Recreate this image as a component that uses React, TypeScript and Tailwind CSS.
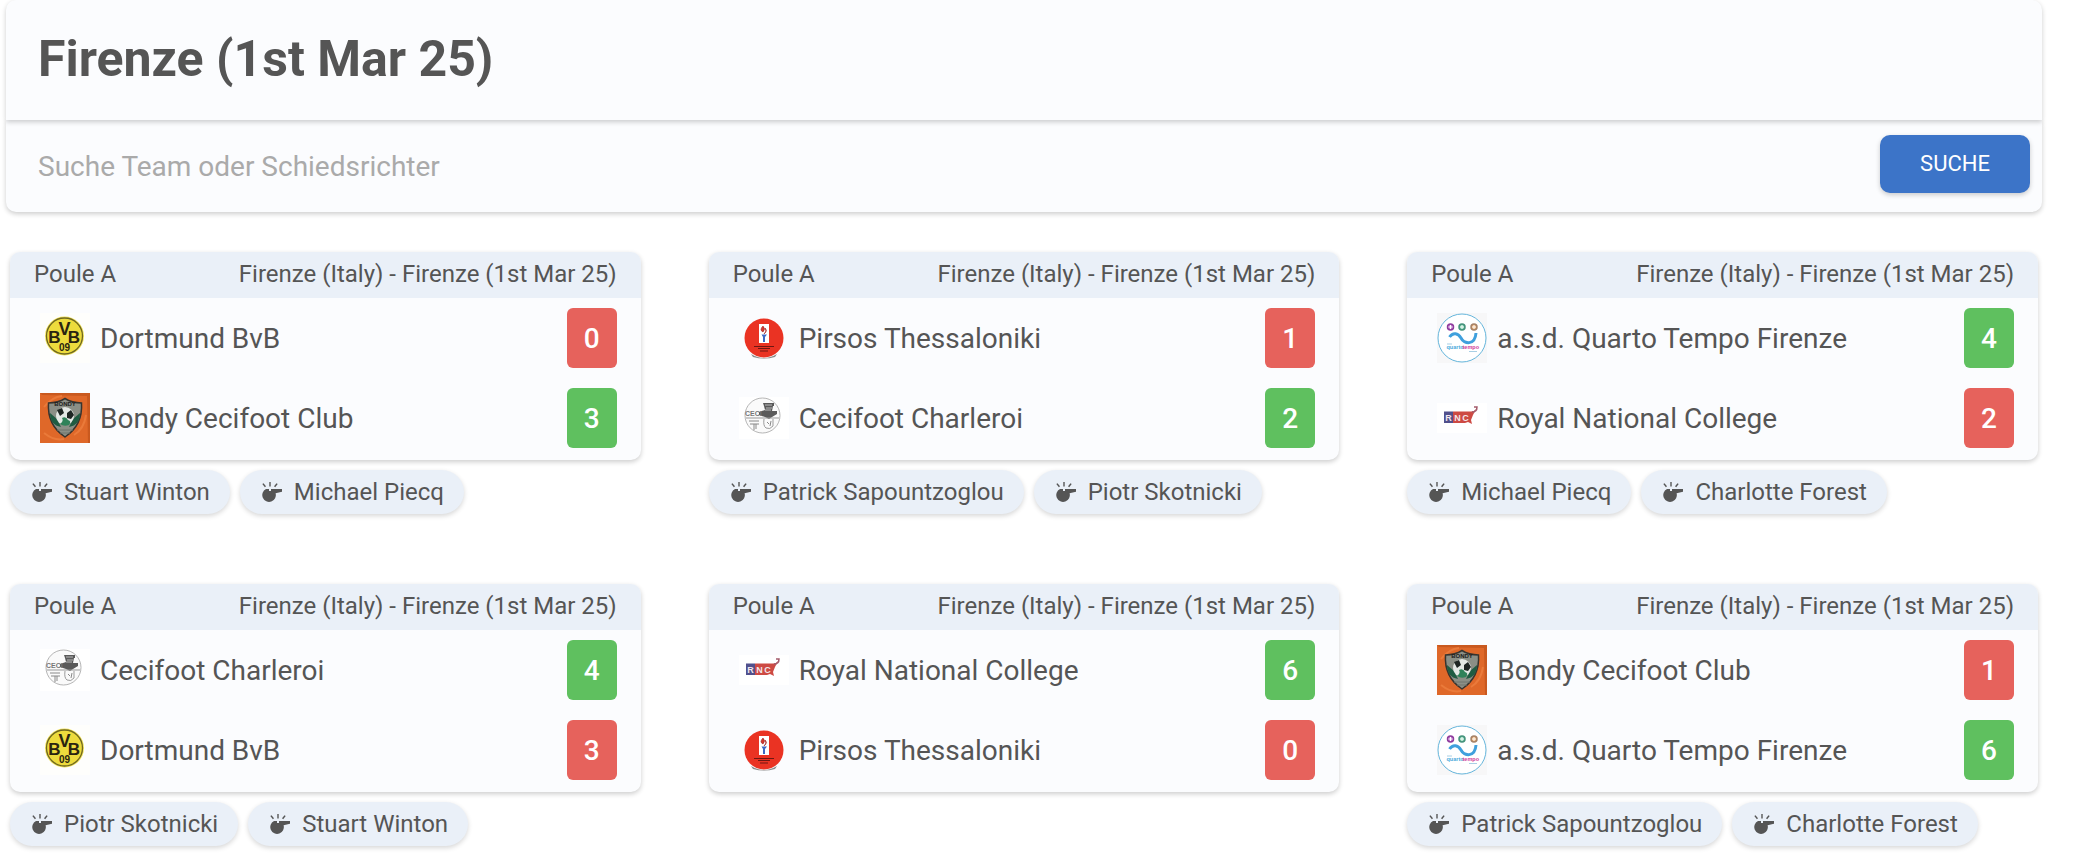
import type { ReactNode } from "react";

type Team = {
  name: string;
  logo: ReactNode;
};

const teams: Record<string, Team> = {
  bvb: { name: "Dortmund BvB", logo: <DortmundLogo /> },
  bondy: { name: "Bondy Cecifoot Club", logo: <BondyLogo /> },
  pirsos: { name: "Pirsos Thessaloniki", logo: <PirsosLogo /> },
  charleroi: { name: "Cecifoot Charleroi", logo: <CharleroiLogo /> },
  quarto: { name: "a.s.d. Quarto Tempo Firenze", logo: <QuartoLogo /> },
  rnc: { name: "Royal National College", logo: <RncLogo /> },
};

const tournament = "Firenze (1st Mar 25)";

const matches = [
  { id: 1, home: "bvb", away: "bondy", score: [0, 3], referees: ["Stuart Winton", "Michael Piecq"] },
  { id: 2, home: "pirsos", away: "charleroi", score: [1, 2], referees: ["Patrick Sapountzoglou", "Piotr Skotnicki"] },
  { id: 3, home: "quarto", away: "rnc", score: [4, 2], referees: ["Michael Piecq", "Charlotte Forest"] },
  { id: 4, home: "charleroi", away: "bvb", score: [4, 3], referees: ["Piotr Skotnicki", "Stuart Winton"] },
  { id: 5, home: "rnc", away: "pirsos", score: [6, 0], referees: [] },
  { id: 6, home: "bondy", away: "quarto", score: [1, 6], referees: ["Patrick Sapountzoglou", "Charlotte Forest"] },
];

function DortmundLogo() {
  return (
    <svg viewBox="0 0 50 50" className="size-[50px] shrink-0" aria-hidden="true">
      <rect width="50" height="50" fill="#fefefc" />
      <circle cx="24.5" cy="23" r="19.5" fill="#f1e25a" />
      <circle cx="24.5" cy="23" r="18" fill="#eddb3d" stroke="#6f6820" strokeWidth="1.3" />
      <g fill="#2a2410" fontFamily="'Liberation Sans Narrow', 'Liberation Sans', sans-serif" fontWeight="700" textAnchor="middle">
        <text x="14.5" y="29.5" fontSize="17">B</text>
        <text x="24.5" y="22" fontSize="18">V</text>
        <text x="34" y="29.5" fontSize="17">B</text>
        <text x="24.5" y="38" fontSize="10">09</text>
      </g>
    </svg>
  );
}

function BondyLogo() {
  return (
    <svg viewBox="0 0 50 50" className="size-[50px] shrink-0" aria-hidden="true">
      <rect width="50" height="50" fill="#df6829" />
      <path d="M0 0H50V50H48L47 3L2 2Z" fill="#c9591f" />
      <path d="M4 40Q14 48 24 46M34 42Q44 36 46 22M4 14Q12 4 22 3" fill="none" stroke="#ea7a3a" strokeWidth="2" />
      <path d="M8.5 10Q18 10 25 5.5Q32 10 41.5 10Q43 32 25 44Q7 32 8.5 10Z" fill="#8b8f86" stroke="#38342e" strokeWidth="1.5" />
      <path d="M10 20Q10 32 21 34L17 26Z" fill="#1f5c42" />
      <path d="M40 20Q40 32 29 34L33 26Z" fill="#1f5c42" />
      <circle cx="25" cy="23" r="9" fill="#e3e8e4" />
      <path d="M17 17L22 15L24 20L20 23ZM27 20L31 17L34 22L31 26L27 25Z" fill="#1e2623" />
      <path d="M20 31Q24 28 22 25Q26 23 28 27Q32 28 29 32Q24 34 20 31Z" fill="#2f8259" />
      <path d="M17 37H33M20 40H30" stroke="#6f746d" />
      <text x="25" y="13" fontSize="6" fontWeight="700" textAnchor="middle" fill="#1d1d1b" fontFamily="'Liberation Sans', sans-serif">
        BONDY
      </text>
    </svg>
  );
}

function PirsosLogo() {
  return (
    <svg viewBox="0 0 50 50" className="size-[50px] shrink-0" aria-hidden="true">
      <path d="M12 41Q25 49 38 41L36 44Q25 47 14 44Z" fill="#8a8a8a" />
      <circle cx="25" cy="25" r="19.5" fill="#ea3323" />
      <rect x="20" y="11" width="10" height="19" fill="#fff" />
      <path d="M24 13Q20 17 24 19Q27 16 24 13ZM26 15Q29 18 25 21L27 18Z" fill="#d5382e" stroke="#9c2222" strokeWidth="0.6" />
      <path d="M22.5 21.5H28L26 24V29H24V24Z" fill="#3f69c4" />
      <path d="M15 33.5H35M19 35.5H31M21 38H29" stroke="#6e1712" />
    </svg>
  );
}

function CharleroiLogo() {
  return (
    <svg viewBox="0 0 50 50" className="size-[50px] shrink-0" aria-hidden="true">
      <rect y="4" width="50" height="42" fill="#fff" />
      <circle cx="23.5" cy="22.5" r="17.5" fill="#fafafa" stroke="#b5b5b5" />
      <path d="M24 10H35V13H34L33 18H38V21L33 24L30 26L26 24L20 22V19L26 17L25 13Z" fill="#5a5a5a" />
      <path d="M26 12H33M27 15H33M26 17H32" stroke="#bbb" />
      <path d="M25 26Q24 33 27 35Q31 37 34 33L34 26" fill="none" stroke="#9b9b9b" />
      <path d="M28 29L30 31M32 28L31 33M10 28H20M11 31H20M15 31V37M17 31V36" stroke="#888" />
      <text x="6" y="23" fontSize="7" fontWeight="700" fill="#777" fontFamily="'Liberation Sans', sans-serif">
        CECI
      </text>
      <path d="M7 25H40" stroke="#999" />
    </svg>
  );
}

function QuartoLogo() {
  return (
    <svg viewBox="0 0 50 50" className="size-[50px] shrink-0" aria-hidden="true">
      <rect width="50" height="50" fill="#f7f7f8" />
      <circle cx="25" cy="25" r="24" fill="#fff" stroke="#65b5db" />
      <g strokeWidth="1.5">
        <circle cx="13.5" cy="14" r="3" fill="#c078cb" stroke="#8e3c9d" />
        <circle cx="25" cy="14" r="3" fill="#6cc39d" stroke="#45917b" />
        <circle cx="37" cy="14" r="3" fill="#e3a263" stroke="#a58369" />
      </g>
      <path d="M13.5 12V16M11.5 14H15.5M25 12V16M23 14H27M37 12V16M35 14H39" stroke="#fff" />
      <path d="M12.5 24C16 19 21 20 24 25C27 31 38 33 39 20" fill="none" stroke="#3fa0dd" strokeWidth="3" />
      <g fontSize="5.5" fontWeight="700" fontFamily="'Liberation Sans', sans-serif">
        <text x="9.5" y="36" fill="#4aa9dc">quarto</text>
        <text x="25.5" y="36" fill="#cf3a98">tempo</text>
      </g>
      <path d="M10 31H15M32 38.5H40" stroke="#a8cfe4" />
    </svg>
  );
}

function RncLogo() {
  return (
    <svg viewBox="0 0 50 50" className="size-[50px] shrink-0" aria-hidden="true">
      <rect y="10" width="50" height="30" fill="#fff" />
      <path d="M7 18.5H16V30H7Z" fill="#51508c" />
      <path d="M16 18.5H33Q37 19 39 16L36 22L34 27L35 31L31 29L28 30H16Z" fill="#cd4a43" />
      <path d="M35 19Q40 19 40 14L37 14" fill="none" stroke="#a45c6c" strokeWidth="1.5" />
      <g fill="#f3e6ea" fontSize="9" fontWeight="700" textAnchor="middle" fontFamily="'Liberation Sans', sans-serif">
        <text x="11.5" y="27.5">R</text>
        <text x="20.5" y="27.5">N</text>
        <text x="28.5" y="27.5">C</text>
      </g>
    </svg>
  );
}

function WhistleIcon() {
  return (
    <svg viewBox="0 0 20 20" className="size-5 shrink-0" fill="currentColor" aria-hidden="true">
      <path d="M4 7H7V9H9V7H20V9.8L13.6 11.2A6.8 6.8 0 1 1 4 7Z" />
      <path d="M7.3 0H8.7V4.5H7.3ZM0.3 2L1.5 1.2L4 4.3L2.9 5.2ZM14.5 1.2L15.7 2L13.2 5.2L12 4.3Z" />
    </svg>
  );
}

function ScoreBadge({ value, won }: { value: number; won: boolean }) {
  return (
    <span
      className={`flex h-[60px] w-[50px] shrink-0 items-center justify-center rounded-md pt-0.5 text-[28px] font-medium text-white ${
        won ? "bg-[#5fc05f]" : "bg-[#e6625c]"
      }`}
    >
      {value}
    </span>
  );
}

function TeamRow({ team, score, won }: { team: Team; score: number; won: boolean }) {
  return (
    <li className="flex items-center">
      {team.logo}
      <span className="ml-2.5 flex-1 truncate pt-0.5 text-[28px] leading-9">{team.name}</span>
      <ScoreBadge value={score} won={won} />
    </li>
  );
}

function MatchCard({ match }: { match: (typeof matches)[number] }) {
  const [home, away] = match.score;

  return (
    <article>
      <div className="overflow-hidden rounded-[10px] bg-[#fbfcfe] shadow-[0_2px_5px_rgba(0,0,0,0.2)]">
        <header className="flex h-[46px] items-center justify-between bg-[#eaf0f8] px-6 pb-0.5 text-2xl">
          <span>Poule A</span>
          <span>Firenze (Italy) - {tournament}</span>
        </header>
        <ul className="flex flex-col gap-5 pt-2.5 pr-6 pb-3 pl-[30px]">
          <TeamRow team={teams[match.home]} score={home} won={home > away} />
          <TeamRow team={teams[match.away]} score={away} won={away > home} />
        </ul>
      </div>
      <ul className="mt-2.5 flex flex-wrap gap-2.5">
        {match.referees.map((name) => (
          <li
            key={name}
            className="flex h-11 items-center gap-3 rounded-full bg-[#eaf0f8] pr-5 pl-[22px] text-2xl shadow-[0_2px_5px_rgba(0,0,0,0.16)]"
          >
            <WhistleIcon />
            {name}
          </li>
        ))}
      </ul>
    </article>
  );
}

export default function App() {
  return (
    <main className="bg-white pr-[46px] pb-2.5 pl-1.5 font-[Roboto,sans-serif] text-[#555555]">
      <header className="relative flex h-[120px] items-center rounded-t-[10px] bg-[#fbfcfe] px-8 pb-0.5 shadow-[0_2px_5px_rgba(0,0,0,0.2)]">
        <h1 className="text-[50px] font-bold">{tournament}</h1>
      </header>
      <form
        className="flex h-[92px] items-center rounded-b-[10px] bg-[#fbfcfe] pr-3 pl-8 shadow-[0_2px_5px_rgba(0,0,0,0.2)]"
        onSubmit={(e) => e.preventDefault()}
      >
        <input
          type="search"
          aria-label="Suche Team oder Schiedsrichter"
          placeholder="Suche Team oder Schiedsrichter"
          className="h-full min-w-0 flex-1 bg-transparent text-[28px] outline-none placeholder:text-[#aaaaaa]"
        />
        <button
          type="submit"
          className="mb-1 h-[58px] w-[150px] rounded-[10px] bg-[#3c74c8] pb-0.5 text-[22px] text-white shadow-[0_2px_5px_rgba(0,0,0,0.2)]"
        >
          SUCHE
        </button>
      </form>

      <div className="mt-10 grid grid-cols-3 gap-x-[68px] gap-y-[70px] px-1">
        {matches.map((match) => (
          <MatchCard key={match.id} match={match} />
        ))}
      </div>
    </main>
  );
}
